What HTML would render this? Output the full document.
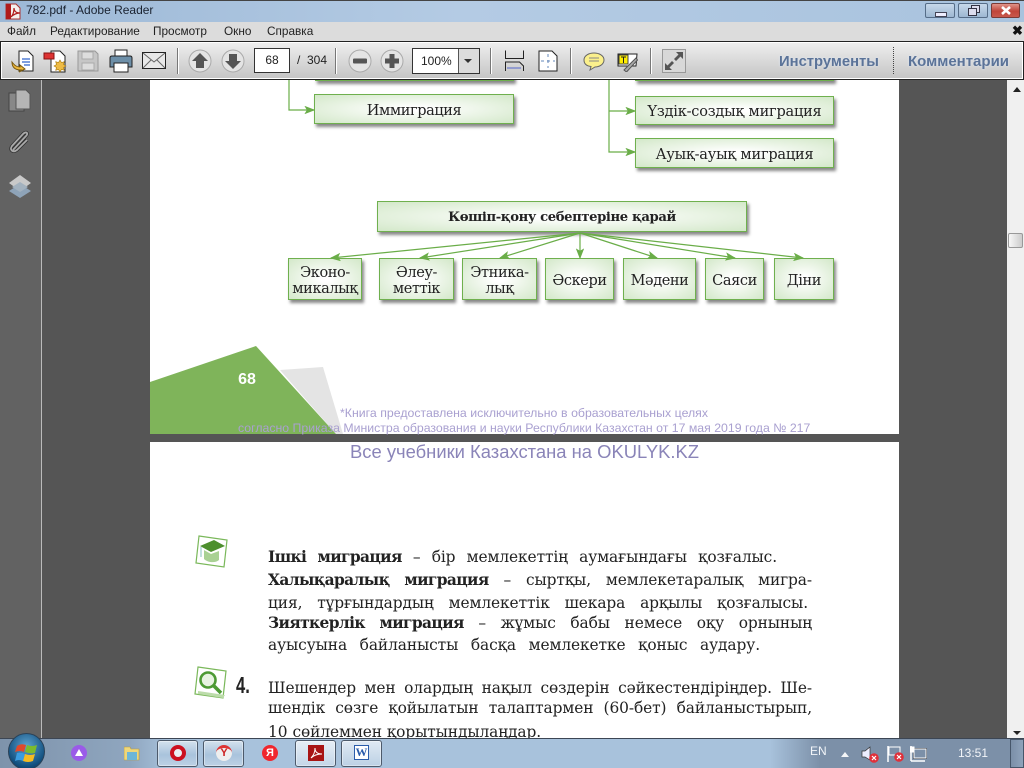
<!DOCTYPE html>
<html><head><meta charset="utf-8"><style>
html,body{margin:0;padding:0;width:1024px;height:768px;overflow:hidden;background:#555}
.a{position:absolute}
#r{position:relative;width:1024px;height:768px;overflow:hidden;font-family:"Liberation Sans",sans-serif}
.box{position:absolute;box-sizing:border-box;border:1.5px solid #6fb04e;background:radial-gradient(ellipse at 50% 50%,#fff 10%,#d3e8c9 100%);box-shadow:2px 3px 3px #888;font:14.5px/16px "DejaVu Serif","Liberation Serif",serif;color:#222;text-align:center;display:flex;align-items:center;justify-content:center;letter-spacing:-.4px;padding-top:3px}
.l{position:absolute;left:268px;width:544px;font:15.4px/20px "DejaVu Serif","Liberation Serif",serif;color:#222;white-space:nowrap;text-align:justify;text-align-last:justify;letter-spacing:-.1px}
.l b{letter-spacing:-.6px}
.m{position:absolute;top:24px;font-size:11.8px;line-height:15px;color:#222}
.sep{position:absolute;top:48px;width:1px;height:26px;background:#777;border-right:1px solid #fff}
.tb{position:absolute;top:740px;width:41px;height:27px;box-sizing:border-box;border:1px solid #4d5a6b;border-radius:3px;background:linear-gradient(#d4e1ee,#a9c3dc 55%,#bdd1e5);box-shadow:inset 0 0 0 1px rgba(255,255,255,.4)}
</style></head><body><div id="r">
<!-- titlebar -->
<div class="a" style="left:0;top:0;width:1024px;height:22px;background:linear-gradient(90deg,#9cb8d6,#b4cbe4 45%,#a9c3de 100%);border-top:1px solid #444;box-sizing:border-box"></div>
<svg class="a" style="left:5px;top:3px" width="16" height="17" viewBox="0 0 16 17"><path d="M1 1h10l4 4v11H1z" fill="#f4f0ee" stroke="#a33" /><rect x="1" y="1" width="5" height="15" fill="#b01c1c"/><path d="M6 14c3-3 3-7 3-9 0 3 2 5 6 5-3 0-6 1-9 4z" fill="none" stroke="#b01c1c" stroke-width="1.2"/></svg>
<div class="a" style="left:26px;top:3px;font-size:12px;line-height:15px;color:#1a2230">782.pdf - Adobe Reader</div>
<div class="a" style="left:925px;top:3px;width:30px;height:15px;box-sizing:border-box;border:1px solid #566d88;border-radius:2px;background:linear-gradient(#c7d8ea,#9db7d2)"><div class="a" style="left:9px;top:8px;width:10px;height:3px;background:#eef;border:1px solid #445"></div></div>
<div class="a" style="left:958px;top:3px;width:30px;height:15px;box-sizing:border-box;border:1px solid #566d88;border-radius:2px;background:linear-gradient(#c7d8ea,#9db7d2)"><div class="a" style="left:12px;top:1px;width:7px;height:6px;border:1px solid #334;background:#dde"></div><div class="a" style="left:9px;top:4px;width:7px;height:6px;border:1px solid #334;background:#dde"></div></div>
<div class="a" style="left:991px;top:3px;width:29px;height:15px;box-sizing:border-box;border:1px solid #7a3a36;border-radius:2px;background:linear-gradient(#e0938a,#c0453a 55%,#c8584c)"><svg class="a" style="left:8px;top:1px" width="12" height="11"><path d="M2 2l8 7M10 2l-8 7" stroke="#fff" stroke-width="2.6"/></svg></div>
<!-- menu -->
<div class="a" style="left:0;top:22px;width:1024px;height:19px;background:#dcdcdc"></div>
<div class="m" style="left:7px">Файл</div><div class="m" style="left:50px">Редактирование</div><div class="m" style="left:153px">Просмотр</div><div class="m" style="left:224px">Окно</div><div class="m" style="left:267px">Справка</div>
<div class="a" style="left:1012px;top:23px;font-size:13px;line-height:16px;font-weight:bold;color:#111">✖</div>
<!-- page area -->
<div class="a" style="left:0;top:79px;width:1024px;height:660px;background:#555"></div>
<div class="a" style="left:0;top:79px;width:41px;height:660px;background:#626262;border-right:1px solid #bbb"></div>
<svg class="a" style="left:8px;top:88px" width="26" height="26"><rect x="1" y="5" width="15" height="18" fill="#888" stroke="#444"/><path d="M8 2h10l4 4v15H8z" fill="#b5b5b5" stroke="#555"/></svg>
<svg class="a" style="left:8px;top:130px" width="24" height="26" fill="none"><path d="M5 20L18 6c3-3 0-5-3-2L4 16c-3 4 1 7 5 4l10-10" stroke="#333" stroke-width="3.4"/><path d="M5 20L18 6c3-3 0-5-3-2L4 16c-3 4 1 7 5 4l10-10" stroke="#aaa" stroke-width="1.8"/></svg>
<svg class="a" style="left:7px;top:174px" width="26" height="26"><path d="M13 12l11 7-11 7-11-7z" transform="translate(0 -2)" fill="#8ea3b8"/><path d="M13 1l11 8-11 8-11-8z" fill="#c9c9c9"/><path d="M13 8l8 5-8 5-8-5z" fill="#a3b2bf"/></svg>
<!-- page 1 -->
<div class="a" style="left:150px;top:79px;width:749px;height:355px;background:#fff"></div>
<div class="box" style="left:315px;top:70px;width:199px;height:11px"></div>
<div class="box" style="left:635px;top:70px;width:199px;height:11px"></div>
<div class="box" style="left:314px;top:94px;width:200px;height:30px"><span>Иммиграция</span></div>
<div class="box" style="left:635px;top:96px;width:199px;height:29px"><span style="letter-spacing:-.2px">Үздік-создық миграция</span></div>
<div class="box" style="left:635px;top:138px;width:199px;height:30px"><span style="letter-spacing:-.2px">Ауық-ауық миграция</span></div>
<div class="box" style="left:377px;top:201px;width:370px;height:31px;font-weight:bold;font-size:13.2px"><span>Көшіп-қону себептеріне қарай</span></div>
<div class="box" style="left:288px;top:258px;width:74px;height:42px"><span>Эконо-<br>микалық</span></div>
<div class="box" style="left:379px;top:258px;width:75px;height:42px"><span>Әлеу-<br>меттік</span></div>
<div class="box" style="left:462px;top:258px;width:75px;height:42px"><span>Этника-<br>лық</span></div>
<div class="box" style="left:545px;top:258px;width:69px;height:42px"><span>Әскери</span></div>
<div class="box" style="left:623px;top:258px;width:73px;height:42px"><span>Мәдени</span></div>
<div class="box" style="left:705px;top:258px;width:59px;height:42px"><span>Саяси</span></div>
<div class="box" style="left:774px;top:258px;width:60px;height:42px"><span>Діни</span></div>
<svg class="a" style="left:150px;top:79px" width="749" height="355">
<defs><marker id="h" markerWidth="9" markerHeight="7" refX="8" refY="3.5" orient="auto"><path d="M0 0L9 3.5 0 7 2 3.5z" fill="#6aad48"/></marker></defs>
<g fill="none" stroke="#6aad48" stroke-width="1.2">
<path d="M139 1v30h25" marker-end="url(#h)"/><path d="M459 1v72h26" marker-end="url(#h)"/><path d="M459 32h26" marker-end="url(#h)"/>
<path d="M430 154L181 179" marker-end="url(#h)"/><path d="M430 154L270 179" marker-end="url(#h)"/><path d="M430 154L350 179" marker-end="url(#h)"/><path d="M430 154V179" marker-end="url(#h)"/><path d="M430 154L507 179" marker-end="url(#h)"/><path d="M430 154L585 179" marker-end="url(#h)"/><path d="M430 154L653 179" marker-end="url(#h)"/>
</g>
<path d="M130 291L173 288 193 355 186 355z" fill="#e4e4e4"/>
<path d="M0 303L106 267 186 355H0z" fill="#7fb45a"/>
</svg>
<div class="a" style="left:232px;top:371px;width:30px;text-align:center;font-size:16px;line-height:18px;font-weight:bold;color:#fff">68</div>
<div class="a" style="left:340px;top:406px;width:368px;font-size:12.3px;line-height:14px;color:#a9a0d0;white-space:nowrap;text-align-last:justify">*Книга предоставлена исключительно в образовательных целях</div>
<div class="a" style="left:238px;top:421px;width:572px;font-size:12.3px;line-height:14px;color:#a9a0d0;white-space:nowrap;text-align-last:justify">согласно Приказа Министра образования и науки Республики Казахстан от 17 мая 2019 года № 217</div>
<!-- page 2 -->
<div class="a" style="left:150px;top:442px;width:749px;height:297px;background:#fff"></div>
<div class="a" style="left:350px;top:441px;width:349px;font-size:18.4px;line-height:21px;color:#8a84b8;white-space:nowrap;text-align-last:justify">Все учебники Казахстана на OKULYK.KZ</div>
<svg class="a" style="left:193px;top:534px" width="36" height="36"><path d="M6 2l28 4-3 27-28-4z" fill="#fff" stroke="#7ab85a" stroke-width="1.2"/><path d="M7 12l14-6 11 6-14 6z" fill="#4d8f2e"/><path d="M11 16v9c4 4 12 4 15 1v-9l-8 3z" fill="#a9d194"/><path d="M8 13v10" stroke="#9cc" stroke-width="1.2"/></svg>
<svg class="a" style="left:193px;top:665px" width="36" height="36" fill="none"><path d="M5 2l28 4-3 27-28-4z" fill="#fff" stroke="#7ab85a" stroke-width="1.2"/><path d="M5 29l25 4 2-3-27-4z" fill="#bcdcaa"/><circle cx="15" cy="15" r="7.5" stroke="#4d9a34" stroke-width="2.6" fill="#e8f3e2"/><path d="M21 21l7 7" stroke="#4d9a34" stroke-width="3.6"/></svg>
<div class="l" style="top:547px;width:509px"><b>Ішкі миграция</b> – бір мемлекеттің аумағындағы қозғалыс.</div>
<div class="l" style="top:570px"><b>Халықаралық миграция</b> – сыртқы, мемлекетаралық мигра-</div>
<div class="l" style="top:593px;width:540px">ция, тұрғындардың мемлекеттік шекара арқылы қозғалысы.</div>
<div class="l" style="top:613px"><b>Зияткерлік миграция</b> – жұмыс бабы немесе оқу орнының</div>
<div class="l" style="top:635px;width:492px">ауысуына байланысты басқа мемлекетке қоныс аудару.</div>
<div class="a" style="left:236px;top:672px;font-size:23px;line-height:26px;font-weight:bold;color:#222;transform:scaleX(.72);transform-origin:left">4.</div>
<div class="l" style="top:678px">Шешендер мен олардың нақыл сөздерін сәйкестендіріңдер. Ше-</div>
<div class="l" style="top:698px">шендік сөзге қойылатын талаптармен (60-бет) байланыстырып,</div>
<div class="l" style="top:722px;width:273px">10 сөйлеммен қорытындылаңдар.</div>
<!-- scrollbar -->
<div class="a" style="left:1007px;top:79px;width:17px;height:660px;background:#f0f0f0"></div>
<div class="a" style="left:1013px;top:87px;width:0;height:0;border-left:4px solid transparent;border-right:4px solid transparent;border-bottom:5px solid #222"></div>
<div class="a" style="left:1008px;top:233px;width:15px;height:15px;box-sizing:border-box;border:1px solid #999;border-radius:2px;background:linear-gradient(90deg,#f8f8f8,#ccc)"></div>
<div class="a" style="left:1013px;top:731px;width:0;height:0;border-left:4px solid transparent;border-right:4px solid transparent;border-top:4px solid #222"></div>
<!-- toolbar -->
<div class="a" style="left:0;top:41px;width:1024px;height:39px;box-sizing:border-box;border:1px solid #222;background:linear-gradient(#efefef,#c4c4c4);box-shadow:inset 0 0 0 1px #fff"></div>
<svg class="a" style="left:10px;top:49px" width="25" height="25"><path d="M9 2h9l5 5v15H9z" fill="#fff" stroke="#222"/><path d="M12 10h8M12 13h8M14 16h6" stroke="#36c" stroke-width="1.3"/><path d="M2 13c0 6 4 8 9 8l-2 2 6-3-5-4v2c-3 0-5-1-8-5z" fill="#eeb93c" stroke="#7a5a10"/></svg>
<svg class="a" style="left:43px;top:49px" width="25" height="25"><path d="M8 2h9l5 5v16H8z" fill="#fff" stroke="#222"/><rect x="1" y="4" width="10" height="6" fill="#d33" stroke="#811"/><path d="M17 11l1.500 2.500 2.800-.8-.8 2.800L23 17l-2.500 1.500.8 2.800-2.800-.8L17 23l-1.500-2.500-2.800.8.8-2.800L11 17l2.500-1.500-.8-2.800 2.800.8z" fill="#eebb44" stroke="#a87a10" stroke-width=".6"/></svg>
<svg class="a" style="left:77px;top:50px" width="22" height="22"><path d="M1 1h17l3 3v17H1z" fill="#c6c6c6" stroke="#999"/><rect x="5" y="2" width="11" height="7" fill="#ddd" stroke="#aaa"/><rect x="5" y="13" width="12" height="7" fill="#ddd" stroke="#aaa"/></svg>
<svg class="a" style="left:109px;top:49px" width="24" height="24"><rect x="6" y="1" width="12" height="7" fill="#fff" stroke="#222"/><path d="M1 9q0-2 2-2h18q2 0 2 2v9H1z" fill="#6d8fa8" stroke="#222"/><rect x="5" y="14" width="14" height="9" fill="#fff" stroke="#222"/></svg>
<svg class="a" style="left:142px;top:52px" width="24" height="18" fill="#e8e8e8" stroke="#222"><rect x=".5" y=".5" width="23" height="16"/><path d="M1 1l11 9L23 1M1 16l8-8M23 16l-8-8" fill="none" stroke="#666"/></svg>
<div class="sep" style="left:177px"></div>
<svg class="a" style="left:188px;top:49px" width="24" height="24"><circle cx="12" cy="12" r="11" fill="#e4e4e4" stroke="#aaa"/><path d="M12 4l8 8h-4v7H8v-7H4z" fill="#555"/></svg>
<svg class="a" style="left:221px;top:49px" width="24" height="24"><circle cx="12" cy="12" r="11" fill="#e4e4e4" stroke="#aaa"/><path d="M12 20l8-8h-4V5H8v7H4z" fill="#555"/></svg>
<div class="a" style="left:254px;top:48px;width:36px;height:25px;box-sizing:border-box;border:1px solid #333;background:#fff;text-align:center;font-size:12px;line-height:23px;color:#222">68</div>
<div class="a" style="left:297px;top:53px;font-size:12px;line-height:15px;color:#222">/&nbsp; 304</div>
<div class="sep" style="left:335px"></div>
<svg class="a" style="left:348px;top:49px" width="24" height="24"><circle cx="12" cy="12" r="11" fill="#e4e4e4" stroke="#aaa"/><rect x="5" y="9.5" width="14" height="5" rx="1" fill="#555"/></svg>
<svg class="a" style="left:380px;top:49px" width="24" height="24"><circle cx="12" cy="12" r="11" fill="#e4e4e4" stroke="#aaa"/><path d="M9.5 5h5v4.5H19v5h-4.5V19h-5v-4.5H5v-5h4.5z" fill="#555"/></svg>
<div class="a" style="left:412px;top:48px;width:68px;height:26px;box-sizing:border-box;border:1px solid #333;background:#fff"><div class="a" style="left:8px;top:0;font-size:12px;line-height:24px;color:#222">100%</div><div class="a" style="left:45px;top:0;width:21px;height:24px;box-sizing:border-box;border-left:1px solid #555;background:#dcdcdc"></div><div class="a" style="left:51px;top:10px;width:0;height:0;border-left:4px solid transparent;border-right:4px solid transparent;border-top:4px solid #333"></div></div>
<div class="sep" style="left:490px"></div>
<svg class="a" style="left:505px;top:50px" width="20" height="22" fill="none" stroke="#222"><path d="M.5 .5v8h18v-8M.5 21v-9h14l4 4v5"/><path d="M2 18h14" stroke="#56c"/></svg>
<svg class="a" style="left:538px;top:50px" width="20" height="22" fill="#fff" stroke="#222"><path d="M1 1h13l5 5v15H1z"/><path d="M10 4v14M3 11h14" stroke="#68b" stroke-dasharray="3 3"/></svg>
<div class="sep" style="left:570px"></div>
<svg class="a" style="left:583px;top:52px" width="22" height="19"><path d="M11 1c5 0 10 2.500 10 7s-5 7-9 7l-5 3 1-3.500C4 14 1 12 1 8c0-4.500 5-7 10-7z" fill="#fbf08c" stroke="#666"/><path d="M6 6h10M6 9h10" stroke="#888"/></svg>
<svg class="a" style="left:617px;top:52px" width="21" height="20"><path d="M1 2h19l-1 12H1z" fill="#fff" stroke="#222"/><rect x="2" y="3" width="9" height="9" fill="#fe0" stroke="#444"/><path d="M4 5h5M6.500 5v6" stroke="#222"/><path d="M7 18l12-12 1.500 2-11 12z" fill="#aaa" stroke="#555"/></svg>
<div class="sep" style="left:650px"></div>
<div class="a" style="left:662px;top:49px;width:24px;height:24px;box-sizing:border-box;border:1px solid #999;background:#d8d8d8"><svg width="22" height="22"><path d="M13 2h7v7l-2.500-2.500L13 11l-2-2 4.500-4.500zM2 13v7h7l-2.500-2.500L11 13l-2-2-4.500 4.500z" fill="#555"/></svg></div>
<div class="a" style="left:779px;top:53px;font-size:14.8px;line-height:18px;font-weight:bold;color:#5b7398;white-space:nowrap;text-shadow:0 0 2px #dfe8f4">Инструменты</div>
<div class="a" style="left:893px;top:47px;height:27px;border-left:1px dotted #444"></div>
<div class="a" style="left:908px;top:53px;font-size:15px;line-height:18px;font-weight:bold;color:#5b7398;white-space:nowrap;text-shadow:0 0 2px #dfe8f4">Комментарии</div>
<!-- taskbar -->
<div class="a" style="left:0;top:738px;width:1024px;height:30px;border-top:1px solid #3c4654;box-sizing:border-box;background:linear-gradient(90deg,#7e93ab 0,#8fa6bf 130px,#a8c2dc 170px,#a8c2dc 770px,#7c90a8 820px,#7c90a8 100%)"></div>
<div class="a" style="left:8px;top:733px;width:37px;height:37px;border-radius:50%;background:radial-gradient(circle at 50% 35%,#5ea3d0,#114f7e 70%,#0b2f50);border:1px solid #2b4258;box-sizing:border-box"></div>
<svg class="a" style="left:15px;top:741px" width="24" height="22"><path d="M2 5q4-3 9-1l-2 7q-4-2-9 0z" fill="#e0492c"/><path d="M12 4q5 2 10 0l-2 8q-5 1-10-1z" fill="#7cbb2e"/><path d="M0 12q4-1 8 1l-2 7q-4-2-8 0z" fill="#3a9ce0" transform="translate(2 0)"/><path d="M10 13q5 2 10 0l-2 7q-5 2-10 0z" fill="#f5bb22"/></svg>
<div class="a" style="left:71px;top:745px;width:16px;height:16px;border-radius:50%;background:#9a5be8"></div>
<div class="a" style="left:75px;top:749px;width:0;height:0;border-left:4px solid transparent;border-right:4px solid transparent;border-bottom:7px solid #fff"></div>
<svg class="a" style="left:124px;top:745px" width="16" height="16"><path d="M0 2h6l1 2h8v11H0z" fill="#efd77a" stroke="#b79a3e" stroke-width=".6"/><rect x="3" y="7" width="10" height="8" fill="#6db6d8"/></svg>
<div class="tb" style="left:157px"></div>
<div class="a" style="left:170px;top:745px;width:16px;height:16px;box-sizing:border-box;border-radius:50%;border:4px solid #cc1020;background:#e9eef3"></div>
<div class="tb" style="left:203px"></div>
<div class="a" style="left:216px;top:745px;width:16px;height:16px;border-radius:50%;background:#eee;border-top:3px solid #d33;box-sizing:border-box;text-align:center;font-size:11px;font-weight:bold;line-height:11px;color:#c22">Y</div>
<div class="a" style="left:262px;top:745px;width:16px;height:16px;border-radius:50%;background:#f0262e;color:#fff;text-align:center;font-size:11px;line-height:16px;font-weight:bold">Я</div>
<div class="tb" style="left:295px;background:linear-gradient(#e6eef6,#c4d6e8)"></div>
<svg class="a" style="left:308px;top:745px" width="16" height="16"><rect width="16" height="16" fill="#a81414"/><path d="M3 13c3-3 4-7 4-10 0 4 2 6 7 6-4 0-8 1-11 4z" fill="none" stroke="#fff"/></svg>
<div class="tb" style="left:341px;background:linear-gradient(#e0eaf4,#bcd0e4)"></div>
<div class="a" style="left:354px;top:745px;width:15px;height:15px;box-sizing:border-box;border:1px solid #2a5cab;background:#fff;color:#2a5cab;font:bold 12px/13px 'Liberation Serif',serif;text-align:center">W</div>
<div class="a" style="left:810px;top:744px;font-size:12px;line-height:15px;color:#f2f5f9">EN</div>
<div class="a" style="left:841px;top:752px;width:0;height:0;border-left:4px solid transparent;border-right:4px solid transparent;border-bottom:5px solid #f4f6f8"></div>
<svg class="a" style="left:861px;top:746px" width="19" height="17"><path d="M1 5h3l5-4v13l-5-3H1z" fill="#eef" stroke="#333" stroke-width=".7"/><circle cx="13" cy="12" r="4.800" fill="#e0303a"/><path d="M11 10l4 4M15 10l-4 4" stroke="#fff" stroke-width="1.200"/></svg>
<svg class="a" style="left:886px;top:745px" width="19" height="18"><path d="M2 1v16" stroke="#fff" stroke-width="1.500"/><path d="M3 2h11v8H3z" fill="#7c90a8" stroke="#fff"/><circle cx="13" cy="12" r="4.800" fill="#e0303a"/><path d="M11 10l4 4M15 10l-4 4" stroke="#fff" stroke-width="1.200"/></svg>
<svg class="a" style="left:910px;top:745px" width="18" height="18" fill="none" stroke="#fff"><rect x="3.500" y="3.500" width="13" height="10" stroke="#111" stroke-width=".7"/><rect x="4" y="4" width="12" height="9"/><path d="M1 1v15M1 16h14" stroke-width="1.500"/><rect x="0" y="2" width="4" height="5" fill="#fff"/></svg>
<div class="a" style="left:958px;top:746px;font-size:12px;line-height:15px;color:#f2f5f9">13:51</div>
<div class="a" style="left:1010px;top:739px;width:14px;height:29px;box-sizing:border-box;border:1px solid #46566a;background:linear-gradient(90deg,#7b8fa8,#8fa3bb)"></div>
</div></body></html>
